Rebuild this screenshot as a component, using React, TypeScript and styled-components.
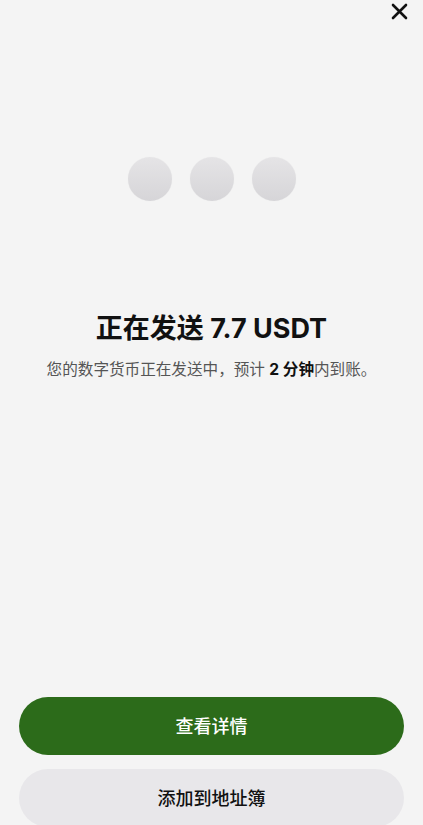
import React from 'react';
import styled, { createGlobalStyle } from 'styled-components';

const GlobalStyle = createGlobalStyle`
  html, body {
    margin: 0;
    padding: 0;
    background: #f4f4f4;
  }
  body {
    font-family: "Noto Sans CJK SC", "Noto Sans", sans-serif;
  }
`;

const Page = styled.div`
  width: 423px;
  height: 825px;
  box-sizing: border-box;
  display: flex;
  flex-direction: column;
  background: #f4f4f4;
  overflow: hidden;
`;

const TopBar = styled.div`
  height: 23px;
  display: flex;
  justify-content: flex-end;
  align-items: center;
  padding: 0 13px 0 0;
`;

const CloseButton = styled.button`
  border: none;
  background: none;
  padding: 0;
  width: 22px;
  height: 22px;
  display: flex;
  align-items: center;
  justify-content: center;
  cursor: pointer;
`;

const Body = styled.div`
  flex: 1;
  display: flex;
  flex-direction: column;
  align-items: center;
  padding-top: 134px;
`;

const Dots = styled.div`
  display: flex;
  gap: 18px;
`;

const Dot = styled.div`
  width: 44px;
  height: 44px;
  border-radius: 50%;
  background: linear-gradient(180deg, #e5e4e6 0%, #d6d5d8 100%);
  box-shadow: 0 0 1px rgba(0, 0, 0, 0.08);
`;

const Title = styled.h1`
  margin: 110px 0 0;
  font-size: 27px;
  line-height: 36px;
  font-weight: 700;
  color: #111;
  font-family: "Inter", "Noto Sans CJK SC", sans-serif;
`;

const Subtitle = styled.p`
  margin: 12px 0 0;
  font-size: 15.6px;
  line-height: 22px;
  color: #555;
  font-family: "Inter", "Noto Sans CJK SC", sans-serif;

  b {
    color: #111;
    font-weight: 700;
  }
`;

const Actions = styled.div`
  display: flex;
  flex-direction: column;
  gap: 14px;
  padding: 0 19px;
  margin-bottom: -2px;
`;

const ActionButton = styled.button<{ $primary?: boolean }>`
  height: 58px;
  border: none;
  border-radius: 29px;
  background: ${(p) => (p.$primary ? '#2c6b1a' : '#e8e7ea')};
  color: ${(p) => (p.$primary ? '#ffffff' : '#111111')};
  font-size: 18px;
  font-weight: 500;
  font-family: "Noto Sans CJK SC", sans-serif;
  padding: 0 0 3px;
  cursor: pointer;
`;

export default function App() {
  return (
    <>
      <GlobalStyle />
      <Page>
        <TopBar>
          <CloseButton aria-label="关闭">
            <svg width="17" height="17" viewBox="0 0 17 17">
              <path d="M2 2 L15 15 M15 2 L2 15" stroke="#111" strokeWidth="2.6" strokeLinecap="round" />
            </svg>
          </CloseButton>
        </TopBar>
        <Body>
          <Dots>
            <Dot />
            <Dot />
            <Dot />
          </Dots>
          <Title>正在发送 7.7 USDT</Title>
          <Subtitle>
            您的数字货币正在发送中，预计 <b>2 分钟</b>内到账。
          </Subtitle>
        </Body>
        <Actions>
          <ActionButton $primary>查看详情</ActionButton>
          <ActionButton>添加到地址簿</ActionButton>
        </Actions>
      </Page>
    </>
  );
}
